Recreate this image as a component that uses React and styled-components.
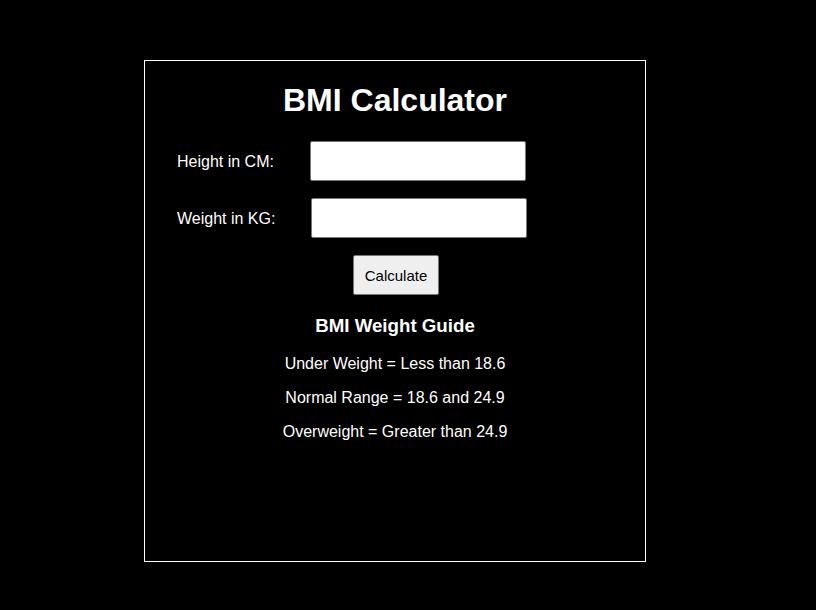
import styled, { createGlobalStyle } from "styled-components";

const GlobalStyle = createGlobalStyle`
  html, body {
    margin: 0;
    background: #000;
    font-family: "Liberation Sans", Arial, sans-serif;
    color: #fff;
  }
`;

const Page = styled.main`
  min-height: 610px;
  padding: 60px 0 0 144px;
  box-sizing: border-box;
`;

const Card = styled.section`
  width: 502px;
  height: 502px;
  box-sizing: border-box;
  border: 1px solid #fff;
  display: flex;
  flex-direction: column;
  align-items: center;
  padding: 21px 32px 0;
`;

const Title = styled.h1`
  margin: 0;
  font-size: 32px;
  line-height: 37px;
  font-weight: 700;
`;

const Field = styled.label`
  align-self: stretch;
  display: flex;
  align-items: center;
  gap: 36px;
  font-size: 16px;
  padding-top: 1px;
  margin-top: ${(p) => p.$top}px;
`;

const Input = styled.input`
  width: 216px;
  height: 40px;
  margin-top: -1px;
  box-sizing: border-box;
  border: 1px solid #767676;
  border-radius: 2px;
  background: #fff;
  padding: 0 6px;
  font-family: inherit;
  font-size: 16px;
`;

const Button = styled.button`
  margin: 17px 0 0 2px;
  height: 40px;
  width: 86px;
  padding: 1px 0 0;
  background: #efefef;
  border: 1px solid #767676;
  border-radius: 2px;
  font-family: "Liberation Sans", Arial, sans-serif;
  font-size: 15px;
  color: #000;
`;

const Subtitle = styled.h3`
  margin: 20px 0 0;
  font-size: 18.72px;
  line-height: 22px;
  font-weight: 700;
`;

const GuideList = styled.div`
  margin-top: 18px;
  display: flex;
  flex-direction: column;
  align-items: center;
  gap: 16px;
`;

const GuideLine = styled.p`
  margin: 0;
  font-size: 16px;
  line-height: 18px;
`;

const guide = [
  "Under Weight = Less than 18.6",
  "Normal Range = 18.6 and 24.9",
  "Overweight = Greater than 24.9",
];

export default function App() {
  return (
    <>
      <GlobalStyle />
      <Page>
        <Card>
          <Title>BMI Calculator</Title>
          <Field $top={22}>
            Height in CM:
            <Input type="text" />
          </Field>
          <Field $top={17}>
            Weight in KG:
            <Input type="text" />
          </Field>
          <Button>Calculate</Button>
          <Subtitle>BMI Weight Guide</Subtitle>
          <GuideList>
            {guide.map((line) => (
              <GuideLine key={line}>{line}</GuideLine>
            ))}
          </GuideList>
        </Card>
      </Page>
    </>
  );
}
